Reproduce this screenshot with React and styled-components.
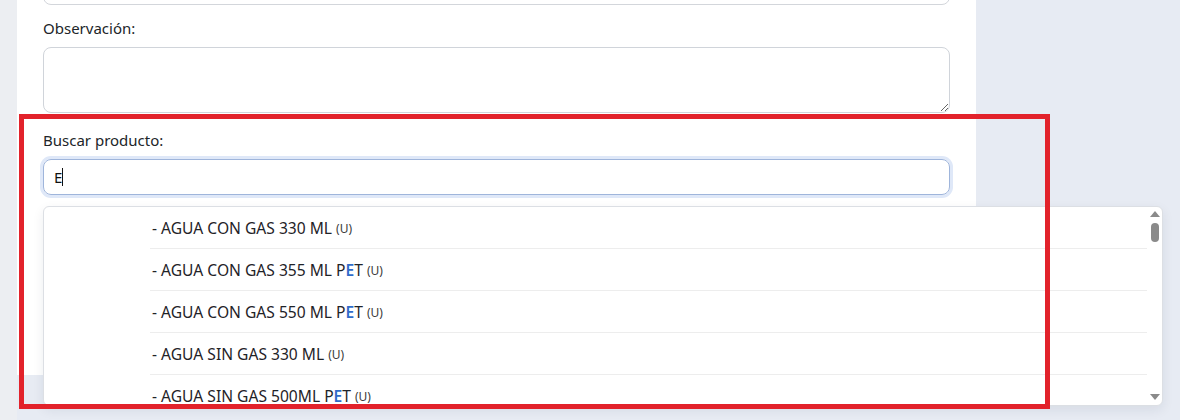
import React from 'react';
import styled, { createGlobalStyle } from 'styled-components';

const GlobalStyle = createGlobalStyle`
  html, body {
    margin: 0;
    padding: 0;
  }
  body {
    background: #e8ecf3;
    font-family: "Noto Sans", "Open Sans", sans-serif;
    color: #212529;
    overflow: hidden;
  }
`;

const Page = styled.div`
  position: relative;
  width: 1180px;
  height: 420px;
  overflow: hidden;
  padding-left: 17px;
  box-sizing: border-box;
  background: linear-gradient(90deg, #eceef2 0, #eceef2 17px, #e7ebf3 17px);
`;

const Card = styled.section`
  display: flow-root;
  width: 959px;
  height: 375px;
  background: #fff;
  padding: 0 26px;
  box-sizing: border-box;
`;

const TopInput = styled.div`
  margin-top: -31px;
  height: 36px;
  border: 1px solid #d3d6db;
  border-radius: 8px;
  box-sizing: border-box;
`;

const Label = styled.label`
  display: block;
  font-size: 15px;
  line-height: 20px;
  color: #212529;
  margin: ${(p) => p.$top}px 0 9px;
`;

const TextArea = styled.textarea`
  display: block;
  width: 100%;
  height: 66px;
  box-sizing: border-box;
  border: 1px solid #d0d4da;
  border-radius: 8px;
  resize: vertical;
  font-family: inherit;
  outline: none;
`;

const SearchBox = styled.div`
  position: relative;
`;

const Input = styled.div`
  display: flex;
  align-items: center;
  height: 36px;
  box-sizing: border-box;
  padding: 0 10px;
  border: 1px solid #9fb5db;
  border-radius: 8px;
  box-shadow: 0 0 0 3px #dfe8f8;
  font-size: 15px;
  color: #111;
`;

const Caret = styled.span`
  display: inline-block;
  width: 1px;
  height: 18px;
  background: #111;
`;

const Dropdown = styled.div`
  position: absolute;
  top: 47px;
  left: 0;
  width: 1120px;
  height: 200px;
  box-sizing: border-box;
  display: flex;
  background: #fff;
  border: 1px solid #dcdfe4;
  border-radius: 6px;
  box-shadow: 0 4px 12px rgba(30, 40, 60, 0.08);
  overflow: hidden;
  z-index: 2;
`;

const List = styled.ul`
  flex: 1;
  margin: 0;
  padding: 0;
  list-style: none;
  overflow: hidden;
`;

const Row = styled.li`
  display: flex;
  height: 42px;
`;

const Thumb = styled.div`
  width: 106px;
  flex-shrink: 0;
`;

const Name = styled.div`
  flex: 1;
  display: flex;
  align-items: center;
  padding-left: 2px;
  border-bottom: 1px solid #ededed;
  font-size: 15.6px;
  color: #1f2328;
  white-space: pre;
`;

const Hit = styled.span`
  color: #2f6bc9;
  font-weight: 600;
`;

const Unit = styled.span`
  font-size: 12px;
  color: #3a3a3a;
  margin-left: 4px;
  padding-top: 2px;
`;

const Scrollbar = styled.div`
  width: 15px;
  flex-shrink: 0;
  display: flex;
  flex-direction: column;
  align-items: center;
  padding: 4px 0 5px;
  box-sizing: border-box;
`;

const Arrow = styled.span`
  width: 0;
  height: 0;
  border-left: 5px solid transparent;
  border-right: 5px solid transparent;
  ${(p) =>
    p.$down
      ? 'border-top: 6px solid #8a8a8a; margin-top: auto;'
      : 'border-bottom: 6px solid #8a8a8a;'}
`;

const Thumbbar = styled.span`
  margin-top: 6px;
  width: 8px;
  height: 19px;
  border-radius: 4px;
  background: #8a8a8a;
`;

const Annotation = styled.div`
  position: absolute;
  left: 19px;
  top: 114px;
  width: 1031px;
  height: 295px;
  border: 5px solid #e2222b;
  box-sizing: border-box;
  pointer-events: none;
  z-index: 3;
`;

const products = [
  { pre: '- AGUA CON GAS 330 ML', pet: false },
  { pre: '- AGUA CON GAS 355 ML P', pet: true },
  { pre: '- AGUA CON GAS 550 ML P', pet: true },
  { pre: '- AGUA SIN GAS 330 ML', pet: false },
  { pre: '- AGUA SIN GAS 500ML P', pet: true },
];

const App = () => (
  <Page>
    <GlobalStyle />
    <Card>
      <TopInput />
      <Label $top={13}>Observación:</Label>
      <TextArea />
      <Label $top={17}>Buscar producto:</Label>
      <SearchBox>
        <Input>
          E<Caret />
        </Input>
        <Dropdown>
          <List>
            {products.map((p) => (
              <Row key={p.pre}>
                <Thumb />
                <Name>
                  {p.pre}
                  {p.pet && (
                    <>
                      <Hit>E</Hit>T
                    </>
                  )}
                  <Unit>(U)</Unit>
                </Name>
              </Row>
            ))}
          </List>
          <Scrollbar>
            <Arrow />
            <Thumbbar />
            <Arrow $down />
          </Scrollbar>
        </Dropdown>
      </SearchBox>
    </Card>
    <Annotation />
  </Page>
);

export default App;
